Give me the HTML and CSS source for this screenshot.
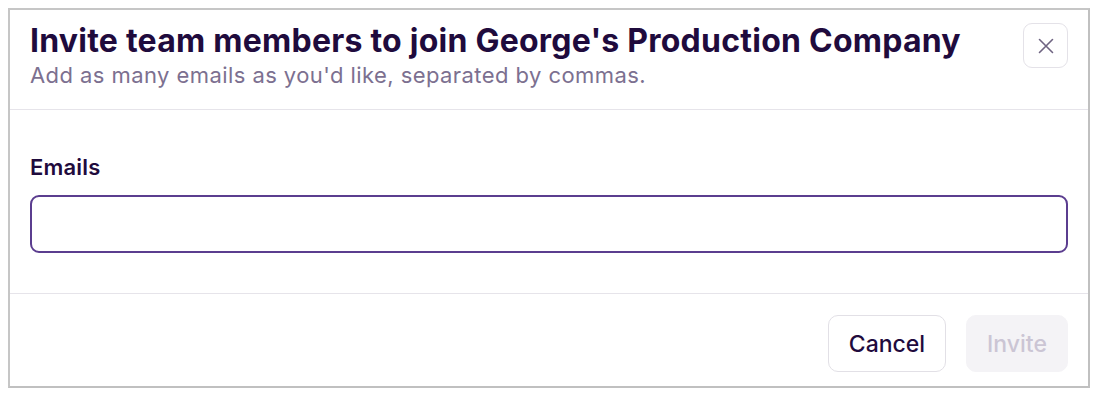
FILE: index.html
```html
<!DOCTYPE html>
<html lang="en">
<head>
<meta charset="utf-8">
<title>Invite team members</title>
<link rel="stylesheet" href="styles.css">
</head>
<body>
<div class="frame">
  <div class="header">
    <div class="titles">
      <h1 class="title">Invite team members to join George's Production Company</h1>
      <p class="subtitle">Add as many emails as you'd like, separated by commas.</p>
    </div>
    <button class="close" type="button" aria-label="Close">
      <svg width="16" height="16" viewBox="0 0 16 16" fill="none" stroke="currentColor" stroke-width="1.6" stroke-linecap="round">
        <path d="M1.5 1.5 L14.5 14.5 M14.5 1.5 L1.5 14.5"/>
      </svg>
    </button>
  </div>
  <div class="body">
    <label class="label" for="emails">Emails</label>
    <input class="input" id="emails" type="text">
  </div>
  <div class="footer">
    <button class="btn btn-cancel" type="button">Cancel</button>
    <button class="btn btn-invite" type="button" disabled>Invite</button>
  </div>
</div>
</body>
</html>
```

FILE: styles.css
```css
* { box-sizing: border-box; }
html, body { margin: 0; padding: 0; background: #ffffff; }
body { font-family: Inter, "Noto Sans", sans-serif; }

.frame {
  margin: 8px;
  width: 1082px;
  height: 380px;
  border: 2px solid #c6c6c6;
  border-right-color: #c0c0c0;
  border-bottom-color: #c0c0c0;
  overflow: hidden;
  background: #ffffff;
}

.header {
  display: flex;
  align-items: flex-start;
  justify-content: space-between;
  padding: 11px 20px 20px 20px;
  border-bottom: 1px solid #e6e4ea;
}
.title {
  margin: 0;
  font-size: 32px;
  line-height: 40px;
  font-weight: 700;
  letter-spacing: 0.24px;
  color: #1f0b3d;
}
.subtitle {
  margin: 0;
  font-size: 22px;
  line-height: 28px;
  font-weight: 400;
  letter-spacing: 0.43px;
  color: #7c7090;
}
.close {
  margin-top: 2px;
  width: 45px;
  height: 45px;
  flex: none;
  display: flex;
  align-items: center;
  justify-content: center;
  padding: 0;
  background: #ffffff;
  border: 1px solid #e4e2e8;
  border-radius: 9px;
  color: #6f6482;
}

.body {
  padding: 43px 20px 40px 20px;
  border-bottom: 1px solid #e6e4ea;
  display: flex;
  flex-direction: column;
}
.label {
  font-size: 22px;
  line-height: 28px;
  font-weight: 600;
  letter-spacing: 0.2px;
  color: #1f0b3d;
  margin-bottom: 14px;
}
.input {
  width: 100%;
  height: 58px;
  border: 2px solid #5b3d8f;
  border-radius: 9px;
  outline: none;
  font: inherit;
  font-size: 22px;
  padding: 0 14px;
}

.footer {
  display: flex;
  justify-content: flex-end;
  gap: 20px;
  padding: 21px 20px 0 20px;
}
.btn {
  height: 57px;
  border-radius: 10px;
  font-family: Inter, "Noto Sans", sans-serif;
  font-size: 23px;
  font-weight: 500;
  padding: 0;
}
.btn-cancel {
  width: 118px;
  background: #ffffff;
  border: 1px solid #e2e0e6;
  color: #1f0b3d;
}
.btn-invite {
  width: 102px;
  background: #f4f3f6;
  border: 1px solid #f4f3f6;
  color: #cbc5d4;
}
```
